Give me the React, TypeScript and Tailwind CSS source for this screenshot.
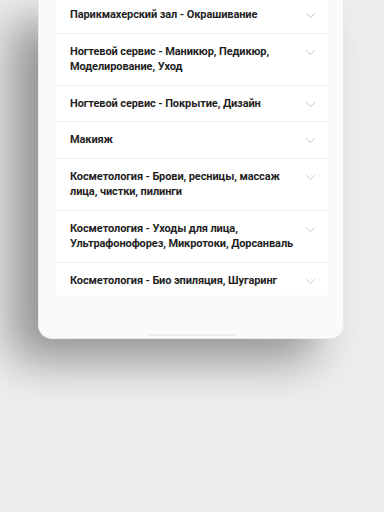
import React from 'react';

const items = [
  'Парикмахерский зал - Окрашивание',
  'Ногтевой сервис - Маникюр, Педикюр, Моделирование, Уход',
  'Ногтевой сервис - Покрытие, Дизайн',
  'Макияж',
  'Косметология - Брови, ресницы, массаж лица, чистки, пилинги',
  'Косметология - Уходы для лица, Ультрафонофорез, Микротоки, Дорсанваль',
  'Косметология - Био эпиляция, Шугаринг',
];

function Chevron() {
  return (
    <svg width="11" height="7" viewBox="0 0 11 7" fill="none" className="mt-[5px] shrink-0">
      <path d="M1 1l4.5 4.5L10 1" stroke="#c9c9c9" strokeWidth="1" />
    </svg>
  );
}

export default function App() {
  return (
    <div
      className="w-[384px] h-[512px] overflow-hidden bg-[#eeeeec]"
      style={{ fontFamily: 'Roboto, "Noto Sans", sans-serif' }}
    >
      <div className="ml-[38px] w-[306px] h-[339px] flex flex-col bg-[#fafafa] border border-t-0 border-[#ebebeb] rounded-b-[14px] shadow-[-28px_22px_46px_rgba(0,0,0,0.38)]">
        <div className="-mt-[3px] ml-[17px] mr-[15px] bg-white">
          {items.map((t, i) => (
            <div
              key={i}
              className="flex items-start justify-between pl-[14px] pr-[12px] py-[10px] border-b border-[#efefef] last:border-b-0 last:pb-[7px]"
            >
              <span className="text-[11px] leading-[15.5px] font-bold tracking-[-0.1px] text-[#1f1f1f] w-[224px]">{t}</span>
              <Chevron />
            </div>
          ))}
        </div>
        <div className="mt-auto mb-[2px] mx-auto w-[88px] h-[2px] rounded-full bg-[#ececec]" />
      </div>
    </div>
  );
}
